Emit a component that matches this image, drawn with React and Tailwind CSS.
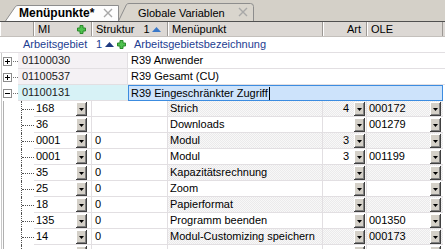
import React from "react";

const XIcon = ({ className }) => (
  <svg className={className} width="10" height="10" viewBox="0 0 10 10">
    <path d="M1 1 L9 9 M9 1 L1 9" stroke="#a8a8a8" strokeWidth="1.4" />
  </svg>
);

const GreenPlus = ({ className = "" }) => (
  <svg className={className} width="9" height="9" viewBox="0 0 9 9">
    <path
      d="M3 0.5 H6 V3 H8.5 V6 H6 V8.5 H3 V6 H0.5 V3 H3 Z"
      fill="#4fc24f"
      stroke="#2a8a2a"
      strokeWidth="1"
    />
  </svg>
);

const UpTri = ({ color, className = "" }) => (
  <svg className={className} width="9" height="5" viewBox="0 0 9 5">
    <path d="M0 5 L4.5 0 L9 5 Z" fill={color} />
  </svg>
);

const DropBtn = () => (
  <span className="w-[11px] h-[14px] shrink-0 bg-[#d4d0c8] border-r border-b border-[#404040] shadow-[inset_1px_1px_0_#ffffff,inset_-1px_-1px_0_#808080] flex items-center justify-center">
    <svg width="5" height="3" viewBox="0 0 5 3" className="mt-[2px]">
      <path d="M0 0 H5 L2.5 3 Z" fill="#000" />
    </svg>
  </span>
);

const Expander = ({ open }) => (
  <span className="w-[9px] h-[9px] border border-[#8c8c8c] bg-white flex items-center justify-center relative">
    <span className="absolute left-[1px] top-[3px] w-[5px] h-px bg-black" />
    {!open && <span className="absolute left-[3px] top-[1px] w-px h-[5px] bg-black" />}
  </span>
);

const level1 = [
  { id: "01100030", name: "R39 Anwender" },
  { id: "01100537", name: "R39 Gesamt (CU)" },
];

const children = [
  { mi: "168", s: "", m: "Strich", art: "4", ole: "000172" },
  { mi: "36", s: "", m: "Downloads", art: "", ole: "001279" },
  { mi: "0001", s: "0", m: "Modul", art: "3", ole: "" },
  { mi: "0001", s: "0", m: "Modul", art: "3", ole: "001199" },
  { mi: "35", s: "0", m: "Kapazitätsrechnung", art: "", ole: "" },
  { mi: "25", s: "0", m: "Zoom", art: "", ole: "" },
  { mi: "18", s: "0", m: "Papierformat", art: "", ole: "" },
  { mi: "135", s: "0", m: "Programm beenden", art: "", ole: "001350" },
  { mi: "14", s: "0", m: "Modul-Customizing speichern", art: "", ole: "000173" },
  { mi: "", s: "", m: "", art: "", ole: "" },
];

const headCell =
  "h-full flex items-center border-r border-[#9c9894] shadow-[inset_1px_0_0_#ffffff]";

export default function App() {
  return (
    <div className="w-[445px] h-[249px] overflow-hidden bg-white font-['Liberation_Sans',Arial,sans-serif] text-[11px] text-black leading-none">
      {/* Tab strip */}
      <div className="h-[21px] bg-[#d4d0c8] flex items-end pl-[5px]">
        <div className="relative w-[114px] h-[16px] z-10">
          <svg className="absolute inset-0" width="114" height="16">
            <path
              d="M0.5 16 L10.5 1.5 Q11.5 0.5 13 0.5 L113.5 0.5 L113.5 16"
              fill="#fdfdfd"
              stroke="#8d8d8d"
            />
          </svg>
          <span className="absolute left-[14px] top-[2px] font-bold text-[12px] leading-[13px] whitespace-nowrap">
            Menüpunkte*
          </span>
          <XIcon className="absolute left-[98px] top-[3px]" />
        </div>
        <div className="relative w-[136px] h-[18px] -ml-[1px]">
          <svg className="absolute inset-0" width="136" height="18">
            <path
              d="M0.5 18 L8.5 1.5 Q9.5 0.5 11 0.5 L132.5 0.5 Q135.5 0.5 135.5 3.5 L135.5 18"
              fill="#d9d5cd"
              stroke="#8d8d8d"
            />
          </svg>
          <span className="absolute left-[20px] top-[4px] text-[11px] leading-[12px] whitespace-nowrap">
            Globale Variablen
          </span>
          <XIcon className="absolute left-[120px] top-[4px]" />
        </div>
      </div>

      {/* Column header */}
      <div className="h-[16px] border-t border-[#505050] bg-[#dcd8d4] flex border-b border-b-[#c4c0bc]">
        <div className={`${headCell} w-[34px]`} />
        <div className={`${headCell} w-[58px] pl-[4px] pr-[5px] justify-between`}>
          <span>MI</span>
          <GreenPlus />
        </div>
        <div className={`${headCell} w-[76px] pl-[4px]`}>
          <span>Struktur</span>
          <span className="ml-[9px]">1</span>
          <UpTri color="#3a78c8" className="ml-[2px]" />
        </div>
        <div className={`${headCell} w-[155px] pl-[4px]`}>Menüpunkt</div>
        <div className={`${headCell} w-[44px] justify-end pr-[5px]`}>Art</div>
        <div className={`${headCell} w-[76px] pl-[4px]`}>OLE</div>
        <div className="flex-1" />
      </div>

      {/* Band header */}
      <div className="h-[16px] flex items-center border-b border-[#e2dfe2] text-[#1d3d91]">
        <div className="w-[18px]" />
        <div className="w-[110px] flex items-center justify-between pl-[5px] pr-[2px]">
          <span>Arbeitsgebiet</span>
          <span className="flex items-center">
            <span>1</span>
            <UpTri color="#1e3a80" className="ml-[3px]" />
            <GreenPlus className="ml-[3px]" />
          </span>
        </div>
        <div className="pl-[6px]">Arbeitsgebietsbezeichnung</div>
      </div>

      {/* Level 1 rows */}
      {level1.map((r) => (
        <div key={r.id} className="h-[16px] flex">
          <div className="w-[18px] relative flex items-center">
            <span className="absolute left-[1px] top-0 bottom-0 w-px bg-[#c8c8c8]" />
            <span className="ml-[3px]">
              <Expander open={false} />
            </span>
            <span className="w-[5px] ml-[1px] border-t border-dotted border-[#707070]" />
          </div>
          <div className="w-[110px] bg-[#f4f1f4] border-r border-b border-[#e2dfe2] pl-[4px] flex items-center text-[#222]">
            {r.id}
          </div>
          <div className="flex-1 border-b border-[#e2dfe2] pl-[3px] flex items-center">{r.name}</div>
        </div>
      ))}

      {/* Selected level 1 row */}
      <div className="h-[16px] flex">
        <div className="w-[18px] relative flex items-center">
          <span className="absolute left-[1px] top-0 bottom-0 w-px bg-[#c8c8c8]" />
          <span className="ml-[3px]">
            <Expander open={true} />
          </span>
          <span className="w-[5px] ml-[1px] border-t border-dotted border-[#707070]" />
        </div>
        <div className="w-[110px] bg-[#d7f2f6] border-b border-[#e2dfe2] pl-[4px] flex items-center text-[#222]">
          01100131
        </div>
        <div className="w-[315px] bg-[#cde3fb] border border-[#3c8ce0] pl-[2px] flex items-center">
          <span>R39 Eingeschränkter Zugriff</span>
          <span className="w-px h-[13px] bg-black ml-px" />
        </div>
      </div>

      {/* Child rows */}
      {children.map((r, i) => {
        const pat =
          i % 2 === 0
            ? "bg-[repeating-conic-gradient(#ebeaeb_0%_25%,#f8f8f8_0%_50%)] bg-[length:2px_2px]"
            : "bg-white";
        return (
          <div key={i} className="h-[16px] flex">
            <div className="w-[34px] relative">
              <span className="absolute left-[1px] top-0 bottom-0 w-px bg-[#c8c8c8]" />
              <span className="absolute left-[3px] top-0 bottom-0 w-px bg-[#b0b0b0]" />
              <span className="absolute left-[21px] top-0 bottom-0 border-l border-dotted border-[#505050]" />
              <span className="absolute left-[22px] top-[8px] w-[12px] border-t border-dotted border-[#505050]" />
            </div>
            <div className="w-[58px] border-r border-b border-[#e2dfe2] flex items-center justify-between pl-[2px] pr-[4px]">
              <span>{r.mi}</span>
              <DropBtn />
            </div>
            <div className="w-[76px] border-r border-b border-[#e2dfe2] flex items-center pl-[3px]">
              {r.s}
            </div>
            <div className={`w-[155px] border-r border-b border-[#e2dfe2] flex items-center pl-[2px] ${pat}`}>
              <span className="whitespace-nowrap">{r.m}</span>
            </div>
            <div className={`w-[44px] border-r border-b border-[#e2dfe2] flex items-center justify-end pr-px ${pat}`}>
              <span className="mr-[5px]">{r.art}</span>
              <DropBtn />
            </div>
            <div className={`w-[76px] border-b border-[#e2dfe2] flex items-center justify-between pl-[2px] pr-[2px] ${pat}`}>
              <span>{r.ole}</span>
              <DropBtn />
            </div>
            <div className="flex-1" />
          </div>
        );
      })}
    </div>
  );
}
